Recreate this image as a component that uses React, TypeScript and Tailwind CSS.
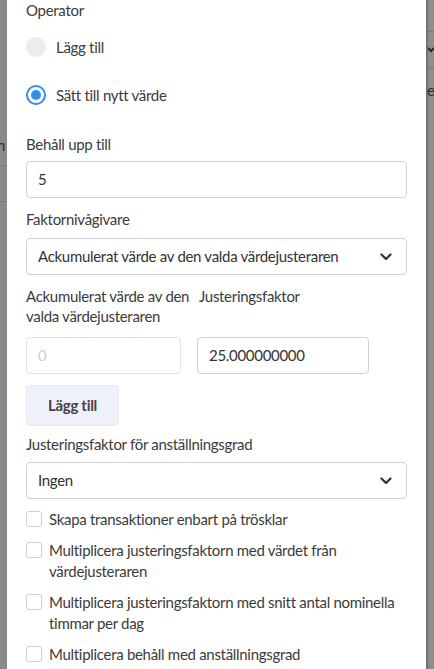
import React from "react";

const font = { fontFamily: '"Lato", "Noto Sans", sans-serif' };

const Chevron = () => (
  <svg width="12" height="8" viewBox="0 0 12 8" className="text-[#333]">
    <path d="M1.5 1.5 L6 6 L10.5 1.5" fill="none" stroke="currentColor" strokeWidth="2.2" strokeLinecap="round" strokeLinejoin="round" />
  </svg>
);

const Radio = ({ checked, label }: { checked?: boolean; label: string }) => (
  <div className="flex items-center h-[20px]">
    {checked ? (
      <div className="w-[20px] h-[20px] rounded-full border-[2px] border-[#2f8ff0] flex items-center justify-center">
        <div className="w-[10px] h-[10px] rounded-full bg-[#2f8ff0]" />
      </div>
    ) : (
      <div className="w-[20px] h-[20px] rounded-full bg-[#ececec]" />
    )}
    <span className="ml-[10px] text-[15px] text-[#3b3b3b]">{label}</span>
  </div>
);

const Select = ({ value }: { value: string }) => (
  <div className="h-[37px] border border-[#d2d2d2] rounded-[4px] flex items-center justify-between pl-[11px] pr-[14px]">
    <span className="text-[15px] text-[#333]">{value}</span>
    <Chevron />
  </div>
);

const Check = ({ lines }: { lines: string[] }) => (
  <div className="flex items-start">
    <div className="w-[16px] h-[16px] mt-[2px] border border-[#cfcfcf] rounded-[3px] shrink-0" />
    <div className="ml-[7px] text-[15px] leading-[21px] text-[#3b3b3b]">
      {lines.map((l, i) => (
        <div key={i} className="whitespace-nowrap">{l}</div>
      ))}
    </div>
  </div>
);

export default function App() {
  return (
    <div className="flex w-[434px] h-[669px] overflow-hidden bg-[#8b8b8b] tracking-[-0.3px]" style={font}>
      {/* left strip of dimmed page */}
      <div className="w-[7px] shrink-0 bg-[#8a8a8a] flex flex-col overflow-hidden">
        <div className="h-[136px]" />
        <div className="text-[15px] leading-[18px] text-[#2c2c2c] -ml-[3px]">n</div>
        <div className="h-[11px]" />
        <div className="h-px bg-[#7a7a7a]" />
        <div className="h-[35px]" />
        <div className="h-px bg-[#7a7a7a]" />
        <div className="flex-1" />
      </div>

      {/* modal */}
      <div className="w-[419px] shrink-0 bg-white pl-[19px] pr-[19px] text-[#3b3b3b]">
        <div className="text-[15px] leading-[22px] -mt-[1px]">Operator</div>
        <div className="mt-[16px]">
          <Radio label="Lägg till" />
        </div>
        <div className="mt-[28px]">
          <Radio checked label="Sätt till nytt värde" />
        </div>

        <div className="text-[15px] leading-[22px] mt-[28px]">Behåll upp till</div>
        <div className="mt-[6px] h-[37px] border border-[#d2d2d2] rounded-[4px] flex items-center pl-[11px] text-[15px] text-[#333]">
          5
        </div>

        <div className="text-[15px] leading-[22px] mt-[10px]">Faktornivågivare</div>
        <div className="mt-[8px]">
          <Select value="Ackumulerat värde av den valda värdejusteraren" />
        </div>

        <div className="flex mt-[11px] gap-[16px]">
          <div className="w-[155px]">
            <div className="text-[15px] leading-[20px] h-[50px]">
              <div className="whitespace-nowrap">Ackumulerat värde av den</div>
              <div className="whitespace-nowrap">valda värdejusteraren</div>
            </div>
            <div className="mt-[1px] h-[37px] border border-[#e3e3e3] rounded-[4px] flex items-center pl-[11px] text-[15px] text-[#d0d0d0]">
              0
            </div>
          </div>
          <div className="w-[172px]">
            <div className="text-[15px] leading-[20px] h-[50px] pl-[2px]">Justeringsfaktor</div>
            <div className="mt-[1px] h-[37px] border border-[#d2d2d2] rounded-[4px] flex items-center pl-[11px] text-[15px] text-[#333]">
              25.000000000
            </div>
          </div>
        </div>

        <div className="mt-[11px] w-[93px] h-[41px] rounded-[4px] bg-[#eff1f8] border border-[#e6e9f2] flex items-center justify-center text-[15px] font-bold text-[#4a3e48]">
          Lägg till
        </div>

        <div className="text-[15px] leading-[22px] mt-[7px]">Justeringsfaktor för anställningsgrad</div>
        <div className="mt-[7px]">
          <Select value="Ingen" />
        </div>

        <div className="mt-[10px] flex flex-col gap-[10px]">
          <Check lines={["Skapa transaktioner enbart på trösklar"]} />
          <Check lines={["Multiplicera justeringsfaktorn med värdet från", "värdejusteraren"]} />
          <Check lines={["Multiplicera justeringsfaktorn med snitt antal nominella", "timmar per dag"]} />
          <Check lines={["Multiplicera behåll med anställningsgrad"]} />
        </div>
      </div>

      {/* right strip of dimmed page */}
      <div className="flex-1 flex bg-[#8d8d8d] overflow-hidden">
        <div className="w-[2px] shrink-0 bg-[#727272]" />
        <div className="flex-1 flex flex-col">
          <div className="h-[31px]" />
          <div className="h-px bg-[#7b7b7b]" />
          <div className="h-[35px] flex items-center text-[#2a2a2a]">
            <svg width="6" height="8" viewBox="0 0 6 8">
              <path d="M0 2 L3 5 L6 2" fill="none" stroke="currentColor" strokeWidth="2" />
            </svg>
          </div>
          <div className="h-px bg-[#7b7b7b]" />
          <div className="text-[15px] leading-[18px] text-[#2c2c2c] mt-[13px] -ml-[1px]">er</div>
          <div className="flex-1" />
        </div>
      </div>
    </div>
  );
}
